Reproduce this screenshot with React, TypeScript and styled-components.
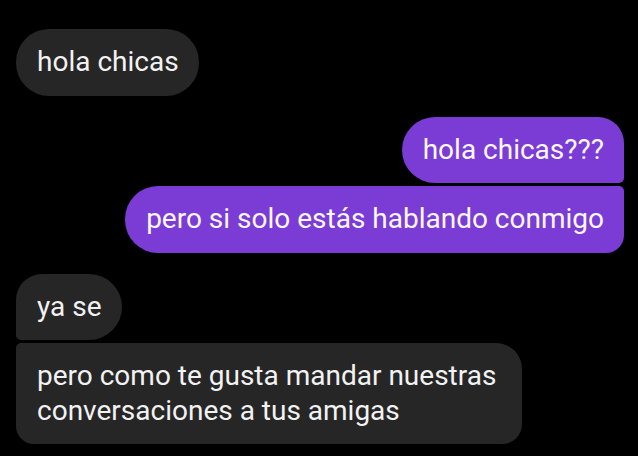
import React, { FC } from "react";
import styled, { createGlobalStyle, css } from "styled-components";

type Corners = [number, number, number, number];

type Message = {
  id: number;
  text: string;
  mine?: boolean;
  corners: Corners;
};

type Group = {
  id: number;
  mine?: boolean;
  messages: Message[];
};

const groups: Group[] = [
  {
    id: 1,
    messages: [{ id: 1, text: "hola chicas", corners: [33, 33, 33, 33] }],
  },
  {
    id: 2,
    mine: true,
    messages: [
      { id: 2, text: "hola chicas???", mine: true, corners: [33, 26, 5, 33] },
      {
        id: 3,
        text: "pero si solo estás hablando conmigo",
        mine: true,
        corners: [33, 5, 18, 33],
      },
    ],
  },
  {
    id: 3,
    messages: [
      { id: 4, text: "ya se", corners: [26, 33, 33, 5] },
      {
        id: 5,
        text: "pero como te gusta mandar nuestras conversaciones a tus amigas",
        corners: [5, 26, 20, 18],
      },
    ],
  },
];

const GlobalStyle = createGlobalStyle`
  html, body {
    margin: 0;
    padding: 0;
    background: #000;
  }
  body {
    font-family: Roboto, "Noto Sans", sans-serif;
    -webkit-font-smoothing: antialiased;
  }
`;

const App: FC = () => {
  return (
    <React.Fragment>
      <GlobalStyle />
      <Thread>
        {groups.map((group) => (
          <GroupBlock key={group.id} mine={group.mine}>
            {group.messages.map((m) => (
              <Bubble key={m.id} mine={m.mine} $corners={m.corners}>
                {m.text}
              </Bubble>
            ))}
          </GroupBlock>
        ))}
      </Thread>
    </React.Fragment>
  );
};

export default App;

const Thread = styled.div`
  width: 638px;
  height: 456px;
  box-sizing: border-box;
  background: #000;
  padding: 29px 14px 0 16px;
  display: flex;
  flex-direction: column;
  gap: 21px;
  overflow: hidden;
`;

const GroupBlock = styled.div<{ mine?: boolean }>`
  display: flex;
  flex-direction: column;
  align-items: flex-start;
  gap: 3px;

  ${(props) =>
    props.mine &&
    css`
      align-items: flex-end;
    `}
`;

const Bubble = styled.div<{ mine?: boolean; $corners: Corners }>`
  box-sizing: border-box;
  max-width: 506px;
  padding: 16px 20px 16px 21px;
  background: #262626;
  color: #f2f2f2;
  font-size: 28px;
  line-height: 34.5px;
  border-radius: ${(p) => p.$corners.map((c) => `${c}px`).join(" ")};

  ${(props) =>
    props.mine &&
    css`
      background: #7b3bd5;
      color: #fbf8ff;
    `}
`;
